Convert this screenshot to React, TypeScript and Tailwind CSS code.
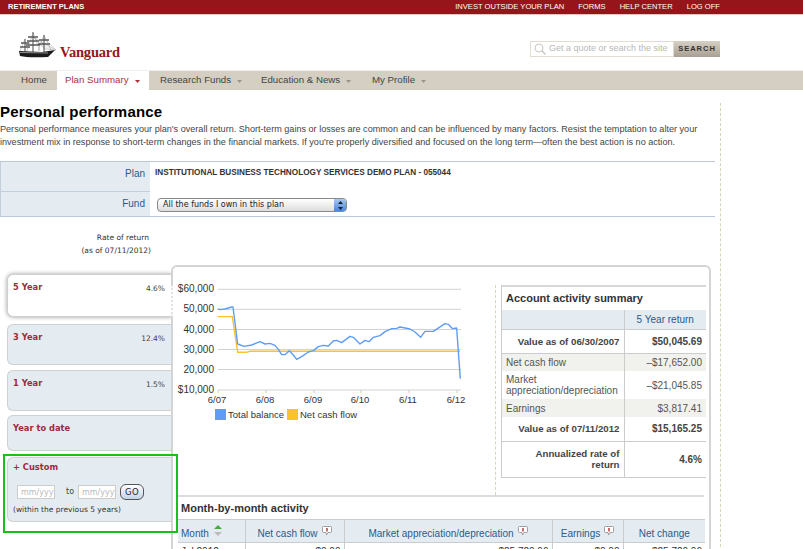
const sans = "font-['Liberation_Sans',Arial,sans-serif]";
const verdana = "font-['DejaVu_Sans',Verdana,sans-serif]";

const navItems = [
  { label: "Home", cls: "w-[57px] pl-[21px]", arrow: false },
  { label: "Plan Summary", cls: "w-[92px] pl-2 bg-white text-[#a8323c]", arrow: true, active: true },
  { label: "Research Funds", cls: "w-[101px] pl-[11px]", arrow: true },
  { label: "Education & News", cls: "w-[111px] pl-[11px]", arrow: true },
  { label: "My Profile", cls: "w-[80px] pl-[11px]", arrow: true },
];

const periods = [
  { label: "5 Year", rate: "4.6%", cls: "h-[43px] bg-white shadow-[0_0_4px_#999] mb-[7px]" },
  { label: "3 Year", rate: "12.4%", cls: "h-[41px] bg-[#e4ecf2] mb-[5px]" },
  { label: "1 Year", rate: "1.5%", cls: "h-[41px] bg-[#e4ecf2] mb-[4px]" },
  { label: "Year to date", rate: "", cls: "h-[36px] bg-[#e4ecf2] mb-[6px]" },
];

const balance =
  "143,147 150,149 165,147 185,141 189,141 203,252 222,259 245,255 270,245 285,252 300,250 315,256 325,268 335,284 345,284 358,272 370,285 380,298 395,290 415,276 430,272 445,260 460,256 475,258 490,243 500,241 515,248 540,229 550,232 570,252 585,241 597,245 610,232 630,227 645,215 665,206 680,205 690,201 720,207 735,216 752,232 765,214 790,214 825,191 835,193 848,206 860,204 871,356";
const cashFlow = "143,170 187,170 203,277 230,277 240,274 870,274";

function Arrow({ color }: { color: string }) {
  return (
    <svg width="5" height="3" viewBox="0 0 5 3" className="ml-[6px] mt-[2px]">
      <path d="M0 0h5L2.500 3z" fill={color} />
    </svg>
  );
}

function Ship() {
  return (
    <svg width="40" height="28" viewBox="0 0 40 28" className="shrink-0">
      <path d="M15 6 L38 19 L27 18 Z M26 7 L38 19" fill="#eee" stroke="#aaa" strokeWidth="0.5" />
      <path d="M1 20 L2 25 Q10 27 30 26 L37 19 L24 21 Z" fill="#1c1c1c" />
      <path d="M2 21.500 L30 22" stroke="#ddd" strokeWidth="0.6" />
      <path d="M15 1 V21 M26 4 V21 M7 8 V21" stroke="#333" strokeWidth="0.9" />
      <path d="M10 6h10M9 10h12M8 14h14M21 9h10M20 13h12M3 12h8M2 16h10" stroke="#555" strokeWidth="1.3" />
      <path d="M7 8 L2 20 M15 2 L9 20 M15 2 L22 20 M26 4 L20 20 M26 4 L33 19" stroke="#777" strokeWidth="0.4" />
    </svg>
  );
}

function BubbleIcon() {
  return (
    <svg width="10" height="10" viewBox="0 0 10 10" className="inline-block ml-[4px] align-[1px]">
      <path d="M1.500.5h7a1 1 0 0 1 1 1v4a1 1 0 0 1-1 1H6L4.500 9 4 6.500H1.500a1 1 0 0 1-1-1v-4a1 1 0 0 1 1-1z" fill="#fff" stroke="#888" strokeWidth="0.8" />
      <rect x="4.300" y="2" width="1.400" height="3.500" fill="#b03030" />
    </svg>
  );
}

function Chart() {
  const grid = [
    { y: 289.3, label: "$60,000" },
    { y: 309.3, label: "50,000" },
    { y: 329.5, label: "40,000" },
    { y: 349.5, label: "30,000" },
    { y: 369.5, label: "20,000" },
    { y: 390, label: "$10,000" },
  ];
  const ticks = [
    { x: 217, label: "6/07" },
    { x: 265, label: "6/08" },
    { x: 313, label: "6/09" },
    { x: 360, label: "6/10" },
    { x: 408, label: "6/11" },
    { x: 456, label: "6/12" },
  ];
  return (
    <svg width="322" height="228" viewBox="173 267 322 228" className={`shrink-0 ${sans}`}>
      {grid.map((g) => (
        <g key={g.label}>
          <line x1="218" x2="461" y1={g.y} y2={g.y} stroke="#d2d2d2" />
          <text x="214" y={g.y + 3} textAnchor="end" fontSize="10" fill="#333">
            {g.label}
          </text>
        </g>
      ))}
      {ticks.map((t) => (
        <g key={t.label}>
          <line x1={t.x + 1} x2={t.x + 1} y1="390" y2="393" stroke="#ccc" />
          <text x={t.x} y="403" textAnchor="middle" fontSize="9.500" fill="#333">
            {t.label}
          </text>
        </g>
      ))}
      <g transform="translate(170 260) scale(0.3333)">
        <polyline points={cashFlow} fill="none" stroke="#fcc22c" strokeWidth="4.200" />
        <polyline points={balance} fill="none" stroke="#5f9df5" strokeWidth="4.200" strokeLinejoin="round" />
      </g>
      <rect x="215" y="409" width="11" height="11" fill="#5f9df5" />
      <text x="228" y="418" fontSize="9.500" fill="#333">Total balance</text>
      <rect x="287" y="409" width="11" height="11" fill="#fcc22c" />
      <text x="300" y="418" fontSize="9.500" fill="#333">Net cash flow</text>
    </svg>
  );
}

function Summary() {
  const bold = "font-bold text-[#444] text-right pr-1";
  const cell = "text-[#555] text-[10px] leading-[11px]";
  return (
    <div className={`w-[205px] border-t-[2px] border-[#d8d8d8] border-l border-l-[#ccc] ${sans}`}>
      <div className="h-[23px] pl-1 pt-1 text-[11px] leading-[14px] font-bold text-[#333]">
        Account activity summary
      </div>
      <table className="w-full table-fixed border-collapse text-[10px] leading-[11px]">
        <colgroup>
          <col className="w-[122px]" />
          <col />
        </colgroup>
        <tbody>
          <tr className="h-[19px] bg-[#e4ecf2] border-b border-[#ccc]">
            <td className="border-r border-[#ccc]" />
            <td className="text-center text-[#2a5a8a]">5 Year return</td>
          </tr>
          <tr className="h-[24px] border-b border-[#ccc]">
            <td className={`${bold} text-[9.700px] border-r border-[#ccc]`}>Value as of 06/30/2007</td>
            <td className={bold}>$50,045.69</td>
          </tr>
          <tr className="h-[18px] bg-[#f1f1ed]">
            <td className={`${cell} pl-1 border-r border-[#ccc]`}>Net cash flow</td>
            <td className={`${cell} text-right pr-1`}>–$17,652.00</td>
          </tr>
          <tr className="h-[28px]">
            <td className={`${cell} pl-1 border-r border-[#ccc]`}>Market appreciation/depreciation</td>
            <td className={`${cell} text-right pr-1`}>–$21,045.85</td>
          </tr>
          <tr className="h-[18px] bg-[#f1f1ed]">
            <td className={`${cell} pl-1 border-r border-[#ccc]`}>Earnings</td>
            <td className={`${cell} text-right pr-1`}>$3,817.41</td>
          </tr>
          <tr className="h-[24px] border-b border-[#ccc]">
            <td className={`${bold} text-[9.700px] border-r border-[#ccc]`}>Value as of 07/11/2012</td>
            <td className={bold}>$15,165.25</td>
          </tr>
          <tr className="h-[36px] border-b border-[#ccc]">
            <td className={`${bold} text-[9.700px] pl-[25px] border-r border-[#ccc]`}>Annualized rate of return</td>
            <td className={bold}>4.6%</td>
          </tr>
        </tbody>
      </table>
    </div>
  );
}

function MonthTable() {
  const th = "font-normal text-[#2a5a8a] border-l border-[#ccc] text-center align-bottom pb-[3px]";
  const td = "text-right pr-[3px] pt-[3px] align-top border-l border-[#ccc] text-[#333]";
  return (
    <div className={`mx-[5px] border-t-[2px] border-[#ddd] ${sans}`}>
      <div className="h-[22px] pl-[3px] pt-1 text-[11px] leading-[14px] font-bold text-[#333]">
        Month-by-month activity
      </div>
      <table className="w-[527px] table-fixed border-collapse text-[10px] leading-[11px]">
        <colgroup>
          <col className="w-[67px]" />
          <col className="w-[99px]" />
          <col className="w-[208px]" />
          <col className="w-[71px]" />
          <col />
        </colgroup>
        <thead>
          <tr className="h-[23px] bg-[#e4ecf2] border-t border-[#ccc]">
            <th className="font-normal text-[#2a5a8a] text-left pl-[3px] align-bottom pb-[3px]">
              Month
              <svg width="8" height="11" viewBox="0 0 8 11" className="inline-block ml-[5px] align-[1px]">
                <path d="M4 0l4 4H0z" fill="#4aa84a" />
                <path d="M4 11L0 7h8z" fill="#bbb" />
              </svg>
            </th>
            <th className={th}>Net cash flow<BubbleIcon /></th>
            <th className={th}>Market appreciation/depreciation<BubbleIcon /></th>
            <th className={th}>Earnings<BubbleIcon /></th>
            <th className={th}>Net change</th>
          </tr>
        </thead>
        <tbody>
          <tr className="h-[18px] border-t border-[#ccc]">
            <td className="pl-[3px] pt-[3px] align-top text-[#333]">Jul 2012</td>
            <td className={td}>$0.00</td>
            <td className={td}>$25,720.96</td>
            <td className={td}>$0.00</td>
            <td className={td}>$25,720.96</td>
          </tr>
        </tbody>
      </table>
    </div>
  );
}

export default function App() {
  return (
    <div className={`relative h-[549px] w-[803px] overflow-hidden bg-white ${sans}`}>
      {/* top bar */}
      <div className="flex h-[15px] items-center justify-between border-b border-[#e8c4c4] bg-[#96151b] pl-2 pr-[83px] text-white">
        <span className="text-[7.500px] font-bold">RETIREMENT PLANS</span>
        <div className="flex gap-[14px] text-[7.600px]">
          <span>INVEST OUTSIDE YOUR PLAN</span>
          <span>FORMS</span>
          <span>HELP CENTER</span>
          <span>LOG OFF</span>
        </div>
      </div>

      {/* logo + search */}
      <div className="flex h-[55px] items-start justify-between pl-[18px] pr-[83px]">
        <div className="mt-4 flex items-end">
          <Ship />
          <span className="mb-[-3px] ml-[2px] font-['Liberation_Serif',serif] text-[14.500px] font-bold leading-[20px] tracking-[-0.2px] text-[#96151b]">
            Vanguard
          </span>
        </div>
        <div className="mt-[26px] flex h-4">
          <div className="flex w-[144px] items-center border border-[#e2ddd0] pl-[3px]">
            <svg width="12" height="12" viewBox="0 0 12 12" fill="none" stroke="#c8c8c0" strokeWidth="1">
              <circle cx="5" cy="5" r="4" />
              <path d="M8 8l3.500 3.500" strokeWidth="1.500" />
            </svg>
            <span className="ml-[3px] whitespace-nowrap text-[9px] text-[#b8b8b8]">Get a quote or search the site</span>
          </div>
          <div className="flex w-[46px] items-center justify-center bg-gradient-to-b from-[#d6d1c5] to-[#a89f92] text-[7.500px] font-bold tracking-[1px] text-[#333]">
            SEARCH
          </div>
        </div>
      </div>

      {/* nav */}
      <nav className="flex h-5 bg-[#d4cfc2] text-[9.700px] text-[#444] border-t border-[#efefef]">
        {navItems.map((n) => (
          <div key={n.label} className={`flex items-center whitespace-nowrap ${n.cls}`}>
            {n.label}
            {n.arrow && <Arrow color={n.active ? "#a8323c" : "#9a9488"} />}
          </div>
        ))}
      </nav>

      <div className="mt-[13px] h-[459px] w-[721px] border-r border-dashed border-[#d8d4b8]">
        <h1 className="text-[15px] font-bold leading-[17px] tracking-[0.2px] text-black">Personal performance</h1>
        <p className="mt-[3px] w-[715px] text-[9.100px] leading-[13px] text-[#444]">
          Personal performance measures your plan's overall return. Short-term gains or losses are common and can be influenced by many factors. Resist the temptation to alter your
          <br />
          investment mix in response to short-term changes in the financial markets. If you're properly diversified and focused on the long term—often the best action is no action.
        </p>

        {/* plan / fund */}
        <div className="mt-[12px] w-[715px] border-y border-[#b9c8d8]">
          <div className="flex h-[30px]">
            <div className="w-[150px] border-l border-b border-[#c3d0dc] bg-[#e4ecf2] pr-[5px] pt-1 text-right text-[10px] text-[#2a5a8a]">Plan</div>
            <div className="pl-[5px] pt-[6px] text-[8.200px] font-bold leading-[10px] text-[#333]">
              INSTITUTIONAL BUSINESS TECHNOLOGY SERVICES DEMO PLAN - 055044
            </div>
          </div>
          <div className="flex h-[24px]">
            <div className="w-[150px] border-l border-[#c3d0dc] bg-[#e4ecf2] pr-[5px] pt-1 text-right text-[10px] text-[#2a5a8a]">Fund</div>
            <div className="ml-[7px] mt-[6px] flex h-[14px] w-[190px] items-center justify-between rounded-[4px] border border-[#888] bg-gradient-to-b from-white to-[#ddd]">
              <span className={`pl-[5px] text-[8px] text-[#222] ${verdana}`}>All the funds I own in this plan</span>
              <span className="flex h-full w-3 items-center justify-center rounded-r-[3px] bg-gradient-to-b from-[#a8c8f0] to-[#4a86d8]">
                <svg width="5" height="9" viewBox="0 0 5 9">
                  <path d="M2.500 0L5 3H0zM2.500 9L0 6h5z" fill="#123" />
                </svg>
              </span>
            </div>
          </div>
        </div>

        {/* rate of return note */}
        <div className={`mt-[14px] h-[20px] w-[151px] text-right text-[7.500px] leading-[13px] text-[#333] ${verdana}`}>
          <div className="pr-[2px]">Rate of return</div>
          <div>(as of 07/11/2012)</div>
        </div>

        <div className="mt-[14px] flex">
          {/* period tabs */}
          <div className="w-[172px] shrink-0 pl-[7px] pt-[9px]">
            {periods.map((p) => (
              <div key={p.label} className={`flex items-start justify-between rounded-l-md border border-r-0 border-[#d0d0d0] pl-[5px] pr-[7px] pt-[6px] ${p.cls}`}>
                <span className={`text-[8.300px] font-bold text-[#a02a3c] ${verdana}`}>{p.label}</span>
                <span className={`pt-[2px] text-[7.500px] text-[#444] ${verdana}`}>{p.rate}</span>
              </div>
            ))}
            <div className={`h-[65px] rounded-l-md border border-r-0 border-[#d0d0d0] bg-[#e4ecf2] pl-[5px] pt-[3px] ${verdana}`}>
              <div className="text-[8.300px] font-bold text-[#a02a3c]">+ Custom</div>
              <div className="mt-[11px] flex items-center pl-1 text-[8px] text-[#444]">
                <input readOnly placeholder="mm/yyyy" className={`h-[14px] w-[38px] border border-[#ccc] bg-white pl-[3px] text-[8px] placeholder:text-[#bbb] ${verdana}`} />
                <span className="mx-[11px] mr-1">to</span>
                <input readOnly placeholder="mm/yyyy" className={`h-[14px] w-[38px] border border-[#ccc] bg-white pl-[3px] text-[8px] placeholder:text-[#bbb] ${verdana}`} />
                <span className="ml-1 flex h-4 w-6 items-center justify-center rounded-[6px] border border-[#555] bg-gradient-to-b from-white to-[#c4d4e6] text-[8.500px] tracking-[0.5px] text-[#222]">GO</span>
              </div>
              <div className="mt-[4px] text-[7.500px] text-[#333]">(within the previous 5 years)</div>
            </div>
          </div>

          {/* chart panel */}
          <div className="relative -ml-[1px] h-[300px] w-[540px] shrink-0 rounded-t-md border-2 border-[#d4d4d4] bg-white">
            <div className="absolute -left-[2px] top-[18px] h-[32px] w-[2px] border-l-2 border-dotted border-[#e2e2e2] bg-white" />
            <div className="flex">
              <Chart />
              <div className="mt-[18px] h-[210px] border-l border-dashed border-[#d8d4b8] pl-[5px]">
                <Summary />
              </div>
            </div>
            <MonthTable />
          </div>
        </div>
      </div>

      {/* green annotation box */}
      <div className="absolute left-[3px] top-[454px] h-[79px] w-[175px] border-2 border-[#18c018]" />
    </div>
  );
}
